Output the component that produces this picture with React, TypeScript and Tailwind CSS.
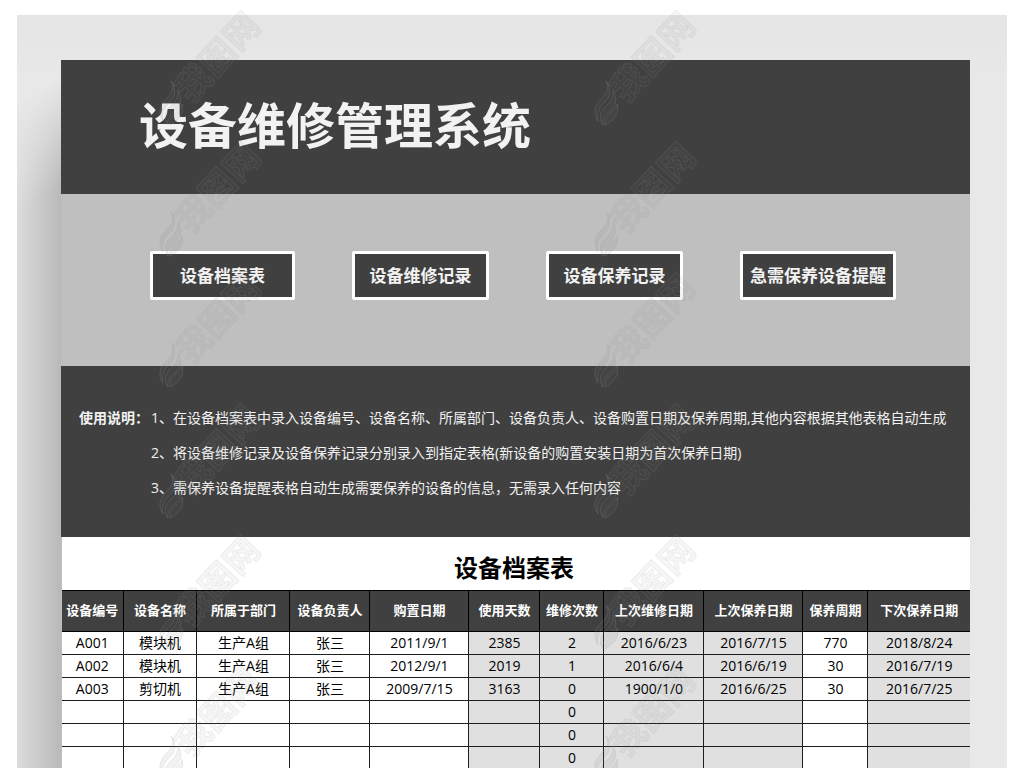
import React from "react";

const actions = [
  { label: "设备档案表", width: "w-[145px]" },
  { label: "设备维修记录", width: "w-[137px]" },
  { label: "设备保养记录", width: "w-[137px]" },
  { label: "急需保养设备提醒", width: "w-[156px]" },
];

const instructions = [
  "1、在设备档案表中录入设备编号、设备名称、所属部门、设备负责人、设备购置日期及保养周期,其他内容根据其他表格自动生成",
  "2、将设备维修记录及设备保养记录分别录入到指定表格(新设备的购置安装日期为首次保养日期)",
  "3、需保养设备提醒表格自动生成需要保养的设备的信息，无需录入任何内容",
];

// "auto" columns are calculated from the other sheets and shaded grey
const columns = [
  { title: "设备编号", width: 61, auto: false },
  { title: "设备名称", width: 74, auto: false },
  { title: "所属于部门", width: 93, auto: false },
  { title: "设备负责人", width: 80, auto: false },
  { title: "购置日期", width: 99, auto: false },
  { title: "使用天数", width: 71, auto: true },
  { title: "维修次数", width: 64, auto: true },
  { title: "上次维修日期", width: 100, auto: true },
  { title: "上次保养日期", width: 99, auto: true },
  { title: "保养周期", width: 65, auto: false },
  { title: "下次保养日期", width: 102, auto: true },
];

const totalWidth = columns.reduce((sum, column) => sum + column.width, 0);

const emptyRow = ["", "", "", "", "", "", "0", "", "", "", ""];

const rows = [
  ["A001", "模块机", "生产A组", "张三", "2011/9/1", "2385", "2", "2016/6/23", "2016/7/15", "770", "2018/8/24"],
  ["A002", "模块机", "生产A组", "张三", "2012/9/1", "2019", "1", "2016/6/4", "2016/6/19", "30", "2016/7/19"],
  ["A003", "剪切机", "生产A组", "张三", "2009/7/15", "3163", "0", "1900/1/0", "2016/6/25", "30", "2016/7/25"],
  emptyRow,
  emptyRow,
  emptyRow,
];

const Watermark: React.FC = () => (
  <svg className="h-[132px] w-[130px] overflow-visible" viewBox="0 0 130 132" aria-hidden="true">
    <g fill="#707070" fillOpacity="0.09" stroke="#a0a0a0" strokeOpacity="0.2" strokeWidth="1">
      <path d="M14 77 C18 84 15 89 9 95 C2 102 1 110 6 117 C4 108 8 102 14 97 C19 92 19 84 14 77 Z" />
      <path d="M21 87 C21 96 17 99 13 103 C7 109 7 115 11 121 C10 114 14 110 19 106 C25 100 25 94 21 87 Z" />
      <path d="M25 100 C25 104 20 107 17 110 C13 114 13 117 13 121 C22 116 28 109 25 100 Z" />
    </g>
    <text
      transform="translate(34 100) rotate(-47)"
      fontFamily="'Noto Sans CJK SC', sans-serif"
      fontSize="35"
      fontWeight="700"
      fill="#707070"
      fillOpacity="0.07"
      stroke="#a0a0a0"
      strokeOpacity="0.16"
      strokeWidth="1"
    >
      我图网
    </text>
  </svg>
);

const Watermarks: React.FC = () => (
  <div className="pointer-events-none absolute left-[157px] top-1 grid grid-cols-[435px_130px]">
    {Array.from({ length: 12 }, (_, i) => (
      <div key={i} className="h-[131px]">
        <Watermark />
      </div>
    ))}
  </div>
);

const DeviceTable: React.FC = () => (
  <section className="bg-white">
    <h2 className="flex h-[53px] items-center justify-center pt-2 pr-1 text-2xl font-bold text-black">设备档案表</h2>
    <table className="w-full table-fixed border-collapse text-center text-black">
      <colgroup>
        {columns.map((column) => (
          <col key={column.title} style={{ width: `${(column.width / totalWidth) * 100}%` }} />
        ))}
      </colgroup>
      <thead>
        <tr className="h-[41px] bg-[#404040] text-[13px] text-white">
          {columns.map((column) => (
            <th
              key={column.title}
              className="whitespace-nowrap border border-black p-0 font-bold first:border-l-0 last:border-r-0"
            >
              {column.title}
            </th>
          ))}
        </tr>
      </thead>
      <tbody>
        {rows.map((row, i) => (
          <tr key={i} className="h-[23px] text-sm leading-5">
            {row.map((cell, j) => (
              <td
                key={j}
                className={`border border-[#1c1f1c] p-0 first:border-l-0 last:border-r-0 ${
                  columns[j].auto ? "bg-[#e0e0e0]" : "bg-white"
                }`}
              >
                {cell}
              </td>
            ))}
          </tr>
        ))}
      </tbody>
    </table>
  </section>
);

export default function App() {
  return (
    <main className="relative h-screen overflow-hidden bg-white px-[17px] pt-[15px] font-['Open_Sans','Noto_Sans_CJK_SC',sans-serif]">
      <div className="relative min-h-full bg-linear-to-b from-[#e5e5e5] to-[#e8e8e8] to-[60px] pt-[45px] pr-[37px] pl-11">
        <div className="absolute inset-y-0 left-0 w-11 bg-linear-to-r from-[#dcdcdc] to-[#b9b9b9] [mask-image:linear-gradient(150deg,transparent_76px,black_170px)]" />
        <div className="relative">
          <header className="flex h-[134px] items-center bg-[#404040] pb-1 pl-[78px]">
            <h1 className="text-[49px] leading-none font-bold text-[#f2f2f2]">设备维修管理系统</h1>
          </header>

          <nav className="flex h-[172px] items-start justify-between bg-[#bfbfbf] pt-[57px] pr-[74px] pl-[89px]">
            {actions.map((action) => (
              <button
                key={action.label}
                type="button"
                className={`h-[49px] rounded-xs border-3 border-white bg-[#404040] text-[17px] font-bold whitespace-nowrap text-[#f2f2f2] ${action.width}`}
              >
                {action.label}
              </button>
            ))}
          </nav>

          <section className="flex gap-0.5 bg-[#404040] pt-[34px] pb-8 pl-[18px] text-sm leading-[35px] text-[#f2f2f2]">
            <h3 className="w-[70px] shrink-0 font-bold">使用说明：</h3>
            <div>
              {instructions.map((line) => (
                <p key={line}>{line}</p>
              ))}
            </div>
          </section>

          <div className="bg-[#bfbfbf] pl-px">
            <DeviceTable />
          </div>
        </div>
      </div>
      <Watermarks />
    </main>
  );
}
